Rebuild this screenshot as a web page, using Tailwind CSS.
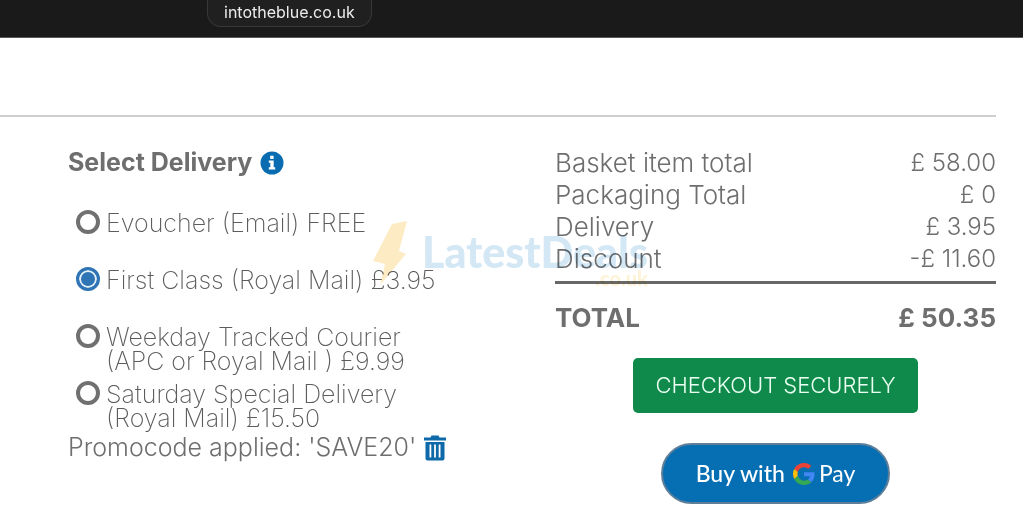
<!DOCTYPE html>
<html lang="en-GB">
<head>
  <meta charset="UTF-8" />
  <meta name="viewport" content="width=device-width, initial-scale=1.0"/>
  <title>Basket - Into The Blue</title>
  <script src="https://cdn.jsdelivr.net/npm/@tailwindcss/browser@4"></script>
</head>
<body class="bg-white font-[Inter,sans-serif] text-[#6e6e6e] overflow-x-hidden">

  <!-- Address bar -->
  <header class="h-[38px] bg-[#1a1a1a] border-b border-[#5a5a5a] pl-[207px]">
    <p class="inline-block h-[27px] px-4 leading-6 text-base text-[#ececec] bg-[#202020] border border-t-0 border-[#383838] rounded-b-[14px]">intotheblue.co.uk</p>
  </header>

  <main class="relative pt-[77px] pr-[27px]">
    <hr class="border-t-2 border-[#cfcfcf]">

    <div class="grid grid-cols-[minmax(0,1fr)_441px] gap-x-[90px] pl-[68px] pt-[30px]">

      <!-- Delivery options -->
      <section>
        <h2 class="flex items-center gap-2 h-8 text-[25px] font-bold">
          Select Delivery
          <svg class="size-6" viewBox="0 0 24 24" aria-hidden="true">
            <circle cx="12" cy="12" r="11.5" fill="#0a6cb0"/>
            <path fill="#fff" d="M10.200 4.800h3.400v3.100h-3.400zM8.800 9.500h4.900v6.700h1.500V18.400H8.800v-2.200h1.500v-4.500H8.800z"/>
          </svg>
        </h2>

        <form class="mt-8 pl-2 text-[25px] leading-6 font-extralight text-[#5c5c5c]">
          <label class="flex gap-1.5 min-h-[57px]">
            <input type="radio" name="delivery" class="appearance-none shrink-0 size-6 -mt-px border-4 border-[#707070] rounded-full">
            <span>Evoucher (Email) FREE</span>
          </label>
          <label class="flex gap-1.5 min-h-[57px]">
            <input type="radio" name="delivery" checked class="appearance-none shrink-0 size-6 -mt-px border-[3px] border-[#2f74b5] bg-[#2f74b5] shadow-[inset_0_0_0_2px_#e3f0fa] rounded-full">
            <span>First Class (Royal Mail) £3.95</span>
          </label>
          <label class="flex gap-1.5 min-h-[57px]">
            <input type="radio" name="delivery" class="appearance-none shrink-0 size-6 -mt-px border-4 border-[#707070] rounded-full">
            <span>Weekday Tracked Courier<br>(APC or Royal Mail ) £9.99</span>
          </label>
          <label class="flex gap-1.5">
            <input type="radio" name="delivery" class="appearance-none shrink-0 size-6 -mt-px border-4 border-[#707070] rounded-full">
            <span>Saturday Special Delivery<br>(Royal Mail) £15.50</span>
          </label>
        </form>

        <div class="flex items-center gap-2 h-9 text-[25px] font-light whitespace-nowrap">
          Promocode applied: 'SAVE20'
          <button type="button" aria-label="Remove promocode">
            <svg class="block w-[22px] h-[26px]" viewBox="0 0 22 26" fill="#0d69a8">
              <path d="M0 2.500h6.500L7.500.500h7l1 2H22v3H0z"/>
              <path fill-rule="evenodd" d="M1.500 7h19v16.500a2 2 0 0 1-2 2h-15a2 2 0 0 1-2-2zM5.500 9.500v13h1.800v-13zm4.600 0v13h1.800v-13zm4.600 0v13h1.800v-13z"/>
            </svg>
          </button>
        </div>
      </section>

      <!-- Order summary -->
      <section class="flex flex-col items-center">
        <table class="w-full text-2xl font-light">
          <tbody>
            <tr><th class="text-left text-[26px] leading-8 font-light">Basket item total</th><td class="text-right">£ 58.00</td></tr>
            <tr><th class="text-left text-[26px] leading-8 font-light">Packaging Total</th><td class="text-right">£ 0</td></tr>
            <tr><th class="text-left text-[26px] leading-8 font-light">Delivery</th><td class="text-right">£ 3.95</td></tr>
            <tr><th class="text-left text-[26px] leading-8 font-light">Discount</th><td class="text-right">-£ 11.60</td></tr>
          </tbody>
        </table>
        <p class="w-full mt-[6px] pt-4 border-t-3 border-[#686868] flex justify-between text-[26px] leading-9 font-bold">
          <span>TOTAL</span><span>£ 50.35</span>
        </p>

        <button type="button" class="mt-[22px] w-[285px] h-[55px] rounded-[5px] bg-[#0f8a4b] text-[22px] font-light text-[#eafff2]">CHECKOUT SECURELY</button>

        <button type="button" class="mt-[30px] w-[229px] h-[61px] rounded-full bg-[#066eb3] border-2 border-[#5f7f99] flex items-center justify-center gap-2 text-white">
          <span class="font-[Lato,sans-serif] text-[23px] font-medium">Buy with</span>
          <span class="flex items-center gap-1">
            <svg class="size-[22px]" viewBox="0 0 48 48" aria-hidden="true">
              <path fill="#ea4335" d="M24 9.500c3.540 0 6.710 1.220 9.210 3.600l6.850-6.850C35.900 2.380 30.470 0 24 0 14.620 0 6.510 5.380 2.560 13.220l7.980 6.190C12.430 13.720 17.740 9.500 24 9.500z"/>
              <path fill="#4285f4" d="M46.980 24.550c0-1.570-.150-3.090-.380-4.550H24v9.020h12.940c-.580 2.960-2.260 5.480-4.780 7.180l7.730 6c4.510-4.180 7.090-10.360 7.090-17.650z"/>
              <path fill="#fbbc05" d="M10.530 28.590c-.480-1.450-.760-2.990-.760-4.590s.270-3.140.760-4.590l-7.980-6.190C.920 16.460 0 20.120 0 24s.920 7.540 2.560 10.780z"/>
              <path fill="#34a853" d="M24 48c6.480 0 11.930-2.130 15.890-5.810l-7.730-6c-2.150 1.450-4.920 2.300-8.160 2.300-6.260 0-11.570-4.220-13.470-9.910l-7.980 6.190C6.510 42.620 14.620 48 24 48z"/>
            </svg>
            <span class="font-[Lato,sans-serif] text-[23px]">Pay</span>
          </span>
        </button>
      </section>
    </div>

    <!-- Watermark -->
    <div class="absolute left-[372px] top-[182px] flex pointer-events-none select-none mix-blend-multiply" aria-hidden="true">
      <svg class="w-[36px] h-[66px]" viewBox="0 0 36 66" fill="#fdebc4">
        <path d="M20 4 35 1 27 31 34 34 8 65l5-21L1 41z"/>
      </svg>
      <div class="pl-[14px] pt-3 font-[Lato,sans-serif] font-black">
        <p class="text-[43px] leading-10 text-[#d3e7f5]">LatestDeals</p>
        <p class="-mt-1 text-xl leading-5 text-right text-[#fdf3d8]">.co.uk</p>
      </div>
    </div>
  </main>

</body>
</html>
